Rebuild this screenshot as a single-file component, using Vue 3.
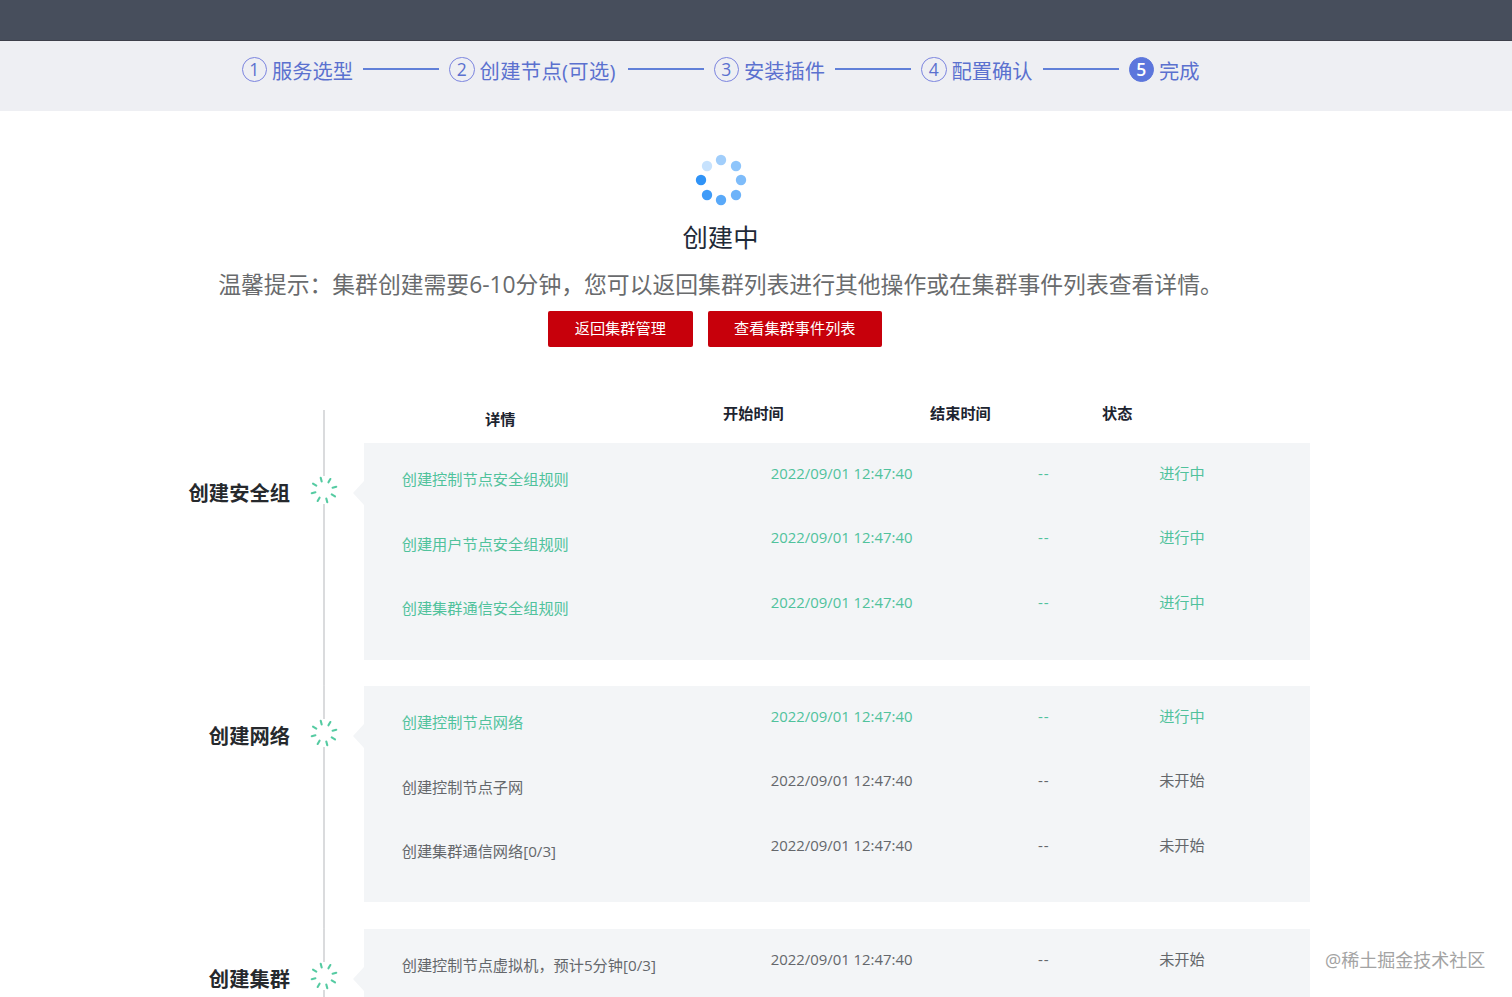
<script setup>
const steps = [
  { n: 1, label: '服务选型' },
  { n: 2, label: '创建节点(可选)', wide: true },
  { n: 3, label: '安装插件' },
  { n: 4, label: '配置确认' },
  { n: 5, label: '完成', active: true },
]

const dots = [
  { x: 51, y: 26, o: 0.62 },
  { x: 46, y: 41, o: 0.7 },
  { x: 31, y: 46, o: 0.8 },
  { x: 17, y: 41, o: 0.92 },
  { x: 11, y: 26, o: 1 },
  { x: 17, y: 12, o: 0.27 },
  { x: 31, y: 6, o: 0.45 },
  { x: 46, y: 12, o: 0.54 },
]

const ticks = [0, 1, 2, 3, 4, 5, 6, 7]
const time = '2022/09/01 12:47:40'

const groups = [
  {
    title: '创建安全组',
    rows: [
      { name: '创建控制节点安全组规则', status: '进行中', running: true },
      { name: '创建用户节点安全组规则', status: '进行中', running: true },
      { name: '创建集群通信安全组规则', status: '进行中', running: true },
    ],
  },
  {
    title: '创建网络',
    rows: [
      { name: '创建控制节点网络', status: '进行中', running: true },
      { name: '创建控制节点子网', status: '未开始' },
      { name: '创建集群通信网络[0/3]', status: '未开始' },
    ],
  },
  {
    title: '创建集群',
    rows: [{ name: '创建控制节点虚拟机，预计5分钟[0/3]', status: '未开始' }],
  },
]
</script>

<template>
  <div class="page">
    <header class="topbar"></header>
    <nav class="steps">
      <template v-for="(s, i) in steps" :key="s.n">
        <span v-if="i > 0" class="step-line"></span>
        <div class="step" :class="{ active: s.active }">
          <span class="step-num">{{ s.n }}</span>
          <span class="step-label" :class="{ wide: s.wide }">{{ s.label }}</span>
        </div>
      </template>
    </nav>

    <section class="hero">
      <svg class="loader" width="62" height="52" viewBox="0 0 62 52">
        <circle v-for="(d, i) in dots" :key="i" :cx="d.x" :cy="d.y" r="5.2" fill="#2f93f7" :fill-opacity="d.o" />
      </svg>
      <h1 class="title">创建中</h1>
      <p class="tip">温馨提示：集群创建需要6-10分钟，您可以返回集群列表进行其他操作或在集群事件列表查看详情。</p>
      <div class="actions">
        <button class="btn">返回集群管理</button>
        <button class="btn wide">查看集群事件列表</button>
      </div>
    </section>

    <main class="timeline">
      <div class="head">
        <div class="axis"></div>
        <div class="head-cells">
          <span class="h-detail">详情</span>
          <span>开始时间</span>
          <span>结束时间</span>
          <span>状态</span>
        </div>
      </div>
      <div v-for="g in groups" :key="g.title" class="group">
        <div class="group-title">{{ g.title }}</div>
        <div class="axis">
          <svg class="spin" width="32" height="28" viewBox="-16 -14 32 28">
            <line
              v-for="t in ticks"
              :key="t"
              x1="0"
              y1="-8.9"
              x2="0"
              y2="-12.7"
              stroke="#55cba2"
              stroke-width="2.1"
              stroke-linecap="round"
              :transform="`rotate(${t * 45 - 15})`"
            />
          </svg>
        </div>
        <div class="panel">
          <div v-for="r in g.rows" :key="r.name" class="row" :class="{ running: r.running }">
            <span class="name">{{ r.name }}</span>
            <span class="latin">{{ time }}</span>
            <span class="dash">--</span>
            <span>{{ r.status }}</span>
          </div>
        </div>
      </div>
    </main>

    <div class="watermark">@稀土掘金技术社区</div>
  </div>
</template>

<style>
body {
  background: #fff;
  overflow: hidden;
}
</style>

<style scoped>
.page {
  position: relative;
  width: 1512px;
  height: 997px;
  overflow: hidden;
  font-family: "Open Sans", "Noto Sans CJK SC", sans-serif;
  color: #64676b;
  font-size: 15.2px;
}
.topbar {
  height: 41px;
  box-sizing: border-box;
  background: #474e5c;
  border-bottom: 1px solid #3d3f4a;
}
.steps {
  display: flex;
  align-items: flex-start;
  height: 69.5px;
  box-sizing: border-box;
  padding: 15.5px 0 0 241.5px;
  background: #eeeff3;
  color: #5b71cf;
}
.step {
  display: flex;
  gap: 5px;
}
.step-num {
  width: 25.5px;
  height: 25.5px;
  box-sizing: border-box;
  border: 1px solid #7b84df;
  border-radius: 50%;
  font-size: 17.5px;
  line-height: 23px;
  text-align: center;
}
.active .step-num {
  background: #5c76dc;
  border-color: #5c76dc;
  color: #fff;
  font-weight: 600;
}
.step-label {
  width: 81px;
  margin-top: -1px;
  font-size: 20.3px;
  line-height: 30px;
  white-space: nowrap;
}
.step-label.wide {
  width: 138px;
  letter-spacing: 0.35px;
}
.step-line {
  width: 76px;
  height: 2px;
  margin: 11.5px 10px 0 10px;
  background: #6180d8;
}
.hero {
  display: flex;
  flex-direction: column;
  align-items: center;
  width: 1441px;
  padding-top: 43.5px;
}
.loader {
  display: block;
}
.title {
  margin: 13px 0 0;
  font-size: 25.3px;
  line-height: 36px;
  font-weight: 400;
  color: #1f2a38;
}
.tip {
  margin: 14px 0 0;
  font-size: 22.82px;
  line-height: 32px;
  color: #696b6d;
  white-space: nowrap;
}
.actions {
  display: flex;
  gap: 15px;
  margin: 10px 11px 0 0;
}
.btn {
  width: 144.5px;
  height: 35.5px;
  padding: 0;
  border: 0;
  border-radius: 2px;
  background: #c7000b;
  color: #fff;
  font: inherit;
  line-height: 33px;
}
.btn.wide {
  width: 174.5px;
}
.timeline {
  padding-top: 63px;
}
.head,
.group {
  display: grid;
  grid-template-columns: 290px 68px 952px;
}
.head {
  height: 33.5px;
}
.head .axis {
  grid-column: 2;
}
.axis {
  display: flex;
  justify-content: center;
  align-items: flex-start;
  background: linear-gradient(#dadbdd, #dadbdd) center / 2px 100% no-repeat;
}
.head-cells {
  display: grid;
  grid-template-columns: 238px 207px 172px 60px;
  padding-left: 127px;
  font-weight: 700;
  line-height: 22px;
  color: #1d2430;
}
.head-cells span {
  margin-top: -8px;
}
.head-cells .h-detail {
  margin-top: -2px;
}
.group {
  height: 242.85px;
}
.group-title {
  padding-top: 35px;
  font-size: 20.3px;
  line-height: 30px;
  font-weight: 700;
  text-align: right;
  color: #26292d;
}
.spin {
  display: block;
  margin-top: 33px;
  background: #fff;
}
.panel {
  position: relative;
  height: 216.5px;
  box-sizing: border-box;
  margin-left: 6px;
  padding: 19px 0 0 37.7px;
  background: #f3f5f7;
}
.panel::before {
  content: "";
  position: absolute;
  left: -11px;
  top: 38px;
  border: 12px solid transparent;
  border-left: 0;
  border-right: 11px solid #f3f5f7;
}
.row {
  display: grid;
  grid-template-columns: 369px 267.3px 121.2px 100px;
  height: 64.45px;
  line-height: 22px;
  white-space: nowrap;
}
.row.running {
  color: #50c29c;
}
.name {
  margin-top: 6.3px;
}
.latin {
  font-size: 14.9px;
}
.dash {
  letter-spacing: 1px;
}
.watermark {
  position: absolute;
  left: 1325px;
  top: 947px;
  font-size: 18px;
  line-height: 26px;
  white-space: nowrap;
  color: #a3a3a3;
  text-shadow: 1px 1px 0 #fff;
}
</style>
